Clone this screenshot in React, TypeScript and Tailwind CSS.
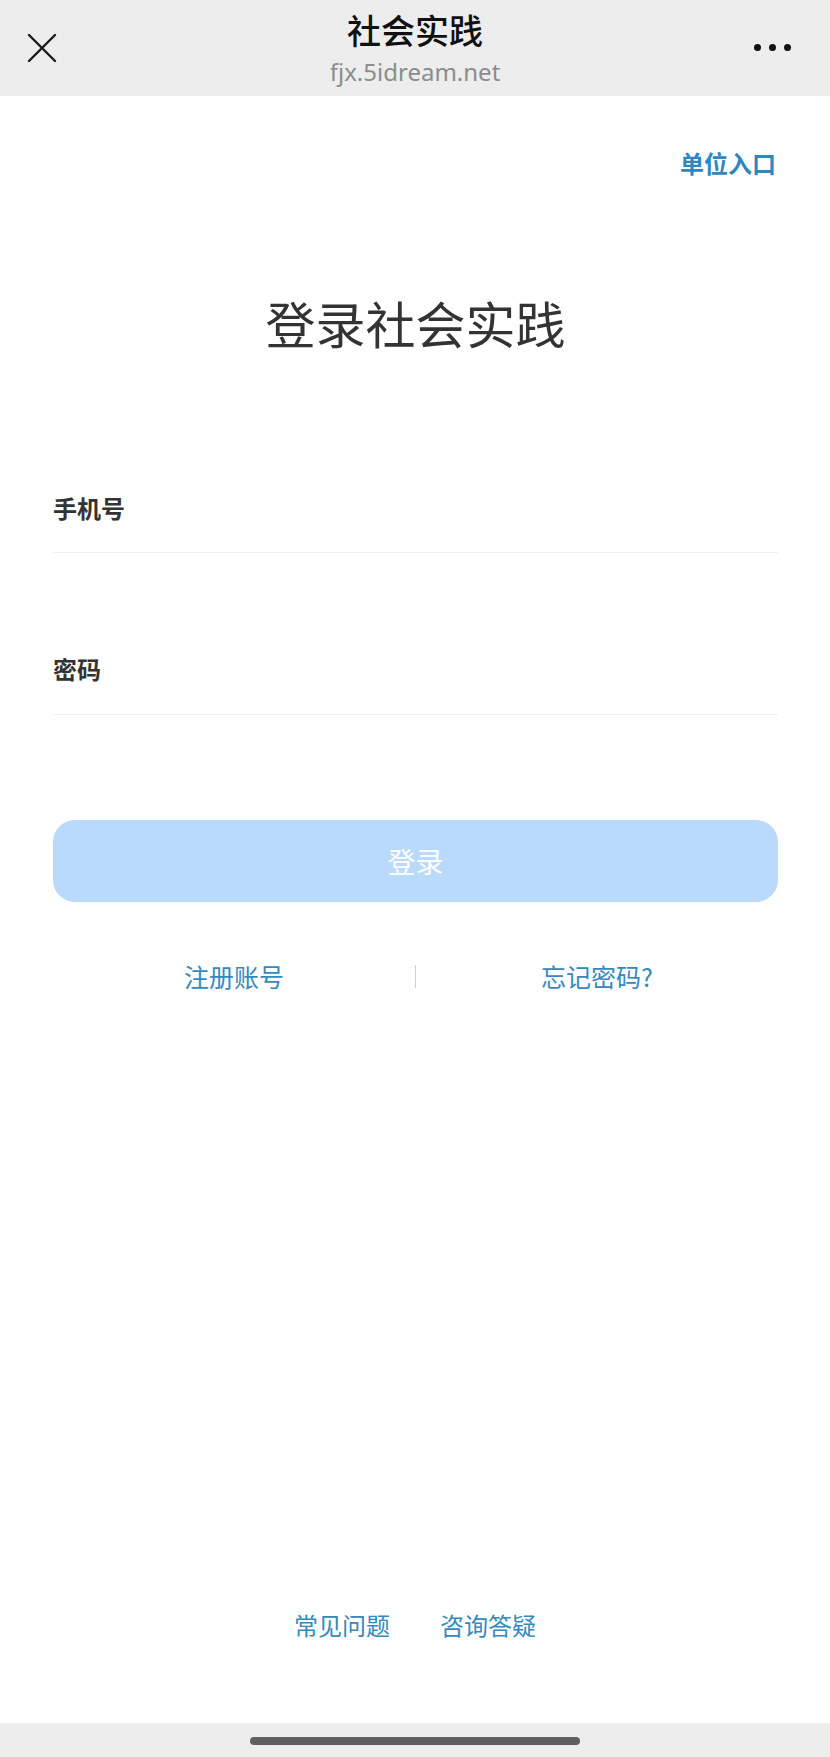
import React from "react";

const cjk = { fontFamily: '"Noto Sans CJK SC", "Noto Sans", sans-serif' };

const CloseIcon = () => (
  <svg width="30" height="30" viewBox="0 0 30 30" fill="none">
    <path d="M2 2 L28 28 M28 2 L2 28" stroke="#1a1a1a" strokeWidth="2.4" strokeLinecap="round" />
  </svg>
);

export default function App() {
  return (
    <div className="flex min-h-[1757px] flex-col bg-white" style={cjk}>
      {/* top bar */}
      <div className="grid h-[96px] grid-cols-[90px_1fr_90px] bg-[#ededed]">
        <div className="flex items-start pl-[27px] pt-[33px]">
          <CloseIcon />
        </div>
        <div className="flex flex-col items-center pt-[10px]">
          <div className="text-[34px] leading-[40px] font-medium text-[#111]">社会实践</div>
          <div
            className="mt-[8px] text-[24px] leading-[28px] text-[#8c8c8c]"
            style={{ fontFamily: '"Noto Sans", sans-serif' }}
          >
            fjx.5idream.net
          </div>
        </div>
        <div className="flex items-start justify-end gap-[8px] pr-[39px] pt-[44px]">
          <span className="h-[7px] w-[7px] rounded-full bg-[#111]" />
          <span className="h-[7px] w-[7px] rounded-full bg-[#111]" />
          <span className="h-[7px] w-[7px] rounded-full bg-[#111]" />
        </div>
      </div>

      {/* main */}
      <div className="flex flex-1 flex-col pl-[53px] pr-[52px]">
        <div className="mt-[51px] flex justify-end">
          <a className="pr-[2px] text-[24px] leading-[32px] font-bold text-[#2f87c2]">单位入口</a>
        </div>

        <h1 className="mt-[114px] text-center text-[50px] leading-[58px] font-normal text-[#333]">
          登录社会实践
        </h1>

        <div className="mt-[141px] border-b border-[#f0f0f0] pb-[28px]">
          <div className="text-[24px] leading-[32px] font-bold text-[#333]">手机号</div>
        </div>

        <div className="mt-[100px] border-b border-[#f0f0f0] pb-[29px]">
          <div className="text-[24px] leading-[32px] font-bold text-[#333]">密码</div>
        </div>

        <button className="mt-[105px] flex h-[82px] items-center justify-center rounded-[22px] bg-[#b9dafa] text-[28px] text-white">
          登录
        </button>

        <div className="mt-[58px] flex items-center">
          <div className="flex-1 text-center text-[25px] leading-[32px] text-[#3589bd]">注册账号</div>
          <div className="h-[23px] w-px bg-[#cfcfcf]" />
          <div className="flex-1 text-center text-[25px] leading-[32px] text-[#3589bd]">忘记密码?</div>
        </div>
      </div>

      {/* footer links */}
      <div className="flex justify-center gap-[50px] pb-[82px] text-[24px] leading-[32px] text-[#3589bd]">
        <span>常见问题</span>
        <span>咨询答疑</span>
      </div>

      {/* home indicator */}
      <div className="flex h-[34px] justify-center bg-[#ededed] pt-[14px]">
        <div className="h-[8px] w-[330px] rounded-full bg-[#5f5f5f]" />
      </div>
    </div>
  );
}
